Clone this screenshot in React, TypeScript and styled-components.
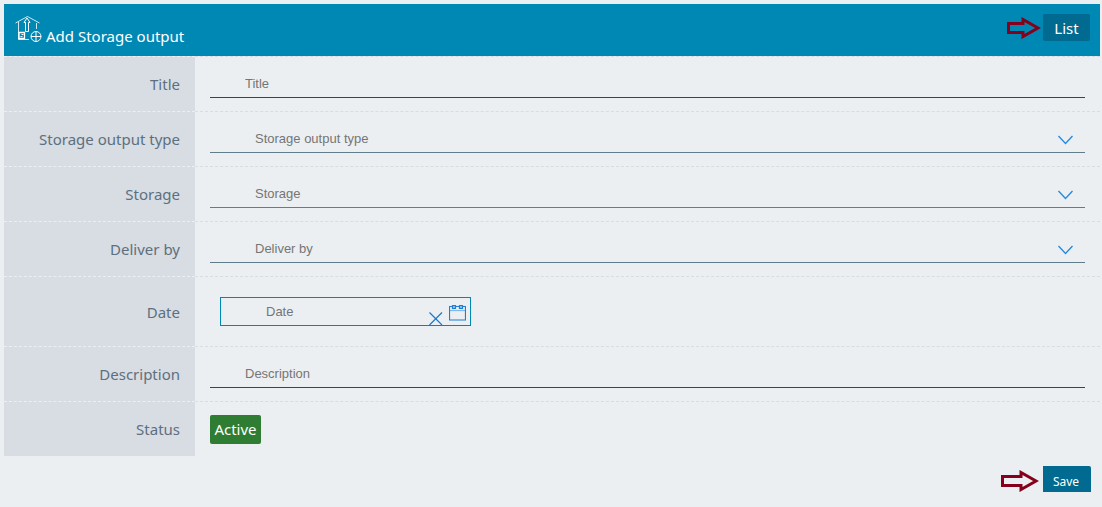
import React from 'react';
import styled, { createGlobalStyle, css } from 'styled-components';

const labelFont = '"Segoe UI", "Noto Sans", "Open Sans", sans-serif';
const fieldFont = '"Liberation Sans", Arial, sans-serif';

const GlobalStyle = createGlobalStyle`
  * { box-sizing: border-box; }
  body {
    margin: 0;
    min-height: 100vh;
    background: #ebeff2;
    font: 15px/22px ${labelFont};
    color: #5c7080;
  }
`;

const Page = styled.main`
  padding: 4px 2px 4px 4px;
`;

const Header = styled.header`
  display: flex;
  align-items: flex-start;
  justify-content: space-between;
  height: 52px;
  padding: 10px 10px 8px 11px;
  background: #0088b5;
  color: #fff;
`;

const Heading = styled.h1`
  display: flex;
  align-items: flex-start;
  gap: 3px;
  margin: 0;
  font-size: 15px;
  font-weight: 400;
  line-height: 44px;
`;

const Action = styled.div<{ $gap: number; $align?: string }>`
  display: flex;
  align-items: ${(p) => p.$align ?? 'center'};
  gap: ${(p) => p.$gap}px;
`;

const ListLink = styled.a`
  min-width: 47px;
  padding: 3px 0 2px;
  border-radius: 2px;
  background: #006a90;
  color: #fff;
  text-align: center;
  text-decoration: none;
`;

const Row = styled.div<{ $tall?: boolean }>`
  display: grid;
  grid-template-columns: 191px 1fr;
  height: ${(p) => (p.$tall ? 70 : 55)}px;
`;

const cell = css`
  display: flex;
  align-items: center;
  padding: 0 15px;
`;

const Label = styled.label`
  ${cell}
  justify-content: flex-end;
  border-top: 1px dashed #ebeff2;
  background: #d8dce3;
`;

const Field = styled.div`
  ${cell}
  min-width: 0;
  border-top: 1px dashed #d8dce3;
`;

const control = css`
  border: 0;
  border-radius: 0;
  outline: 0;
  background: transparent;
  font: 13px/16px ${fieldFont};
  color: #757575;
  &::placeholder { color: #757575; opacity: 1; }
`;

const TextInput = styled.input`
  ${control}
  width: 100%;
  height: 28px;
  padding: 0 35px;
  border-bottom: 1px solid #125560;
`;

const SelectBox = styled.div`
  display: flex;
  align-items: center;
  width: 100%;
  height: 28px;
  border-bottom: 1px solid #607d8b;
`;

const Select = styled.select`
  ${control}
  flex: 1;
  appearance: none;
  height: 27px;
  padding: 0 45px;
`;

const Chevron = styled.svg`
  flex: none;
  margin: 2px 11px 0 -27px;
  pointer-events: none;
`;

const DateBox = styled.div`
  display: flex;
  width: 251px;
  height: 29px;
  margin-left: 10px;
  padding-right: 4px;
  border: 1px solid #0088b5;
`;

const DateInput = styled.input`
  ${control}
  flex: 1;
  min-width: 0;
  padding: 0 0 0 45px;
`;

const IconButton = styled.button<{ $low?: boolean }>`
  display: flex;
  align-items: ${(p) => (p.$low ? 'flex-end' : 'center')};
  padding: ${(p) => (p.$low ? 0 : 2)}px 0 0 6px;
  border: 0;
  background: none;
`;

const StatusButton = styled.button`
  min-width: 51px;
  height: 29px;
  padding: 0 4px;
  border: 0;
  border-radius: 2px;
  background: #2e7d32;
  color: #fff;
  font: 15px/22px ${labelFont};
`;

const Footer = styled.footer`
  display: flex;
  justify-content: flex-end;
  padding: 10px 9px 0;
`;

const SaveButton = styled.button`
  min-width: 48px;
  height: 26px;
  padding: 5px 2px 0 0;
  border: 0;
  border-radius: 0 2px 0 0;
  background: #006a90;
  color: #fff;
  font: 12px/18px ${labelFont};
`;

const Arrow = ({ width }: { width: number }) => (
  <svg width={width} height="22" viewBox={`0 0 ${width} 22`} fill="none" stroke="#85001a" strokeWidth="3" aria-hidden="true">
    <path d={`M1.500 6.500H${width - 18}V2.500L${width - 3} 11L${width - 18} 19.500V15.500H1.500Z`} />
  </svg>
);

const StorageIcon = () => (
  <svg width="28" height="30" viewBox="0 0 28 30" fill="none" stroke="#fff" aria-hidden="true">
    <path d="M0.500 9L12.500 2.500L24.500 9M3.500 8V25.500H14M21.500 9V15" strokeOpacity=".8" />
    <path d="M10.500 17.500V8.500H9L12 4L15 8.500H13.500V17.500Z" />
    <path d="M4 18.500H9.500V24.500H4Z" strokeWidth="1.300" />
    <path d="M6.500 20.500H8.500M5.500 22.500H7.500" />
    <circle cx="21" cy="22.500" r="5" />
    <path d="M21 17.500V27.500M16 22.500H26" />
  </svg>
);

const SelectField = ({ id, text }: { id: string; text: string }) => (
  <Row>
    <Label htmlFor={id}>{text}</Label>
    <Field>
      <SelectBox>
        <Select id={id} defaultValue="">
          <option value="">{text}</option>
        </Select>
        <Chevron width="16" height="10" viewBox="0 0 16 10" fill="none" stroke="#2388df" strokeWidth="1.3" aria-hidden="true">
          <path d="M0.500 1L7.500 8.500L14.500 1" />
        </Chevron>
      </SelectBox>
    </Field>
  </Row>
);

const TextField = ({ id, text }: { id: string; text: string }) => (
  <Row>
    <Label htmlFor={id}>{text}</Label>
    <Field>
      <TextInput id={id} type="text" placeholder={text} />
    </Field>
  </Row>
);

export default function App() {
  return (
    <>
      <GlobalStyle />
      <Page>
        <Header>
          <Heading>
            <StorageIcon />
            Add Storage output
          </Heading>
          <Action $gap={2}>
            <Arrow width={34} />
            <ListLink href="#list">List</ListLink>
          </Action>
        </Header>
        <form onSubmit={(e) => e.preventDefault()}>
          <TextField id="title" text="Title" />
          <SelectField id="type" text="Storage output type" />
          <SelectField id="storage" text="Storage" />
          <SelectField id="deliver" text="Deliver by" />
          <Row $tall>
            <Label htmlFor="date">Date</Label>
            <Field>
              <DateBox>
                <DateInput id="date" type="text" placeholder="Date" />
                <IconButton type="button" aria-label="Clear date" $low>
                  <svg width="14" height="14" viewBox="0 0 14 14" stroke="#1976d2" strokeWidth="1.2">
                    <path d="M0.500 1.500L13 14M13 1.500L0.500 14" />
                  </svg>
                </IconButton>
                <IconButton type="button" aria-label="Pick date">
                  <svg width="17" height="17" viewBox="0 0 17 17" fill="none" stroke="#1e7fd6" strokeWidth="1.2">
                    <path d="M0.500 2.500H16.500V16H0.500Z" />
                    <path d="M1 6.500H16" strokeOpacity=".5" />
                    <path d="M3.500 1.500H6.500V4.500H3.500ZM10.500 1.500H13.500V4.500H10.500Z" fill="#90c4ee" />
                  </svg>
                </IconButton>
              </DateBox>
            </Field>
          </Row>
          <TextField id="description" text="Description" />
          <Row>
            <Label htmlFor="status">Status</Label>
            <Field>
              <StatusButton id="status" type="button">Active</StatusButton>
            </Field>
          </Row>
          <Footer>
            <Action $gap={4} $align="flex-end">
              <Arrow width={38} />
              <SaveButton type="submit">Save</SaveButton>
            </Action>
          </Footer>
        </form>
      </Page>
    </>
  );
}
